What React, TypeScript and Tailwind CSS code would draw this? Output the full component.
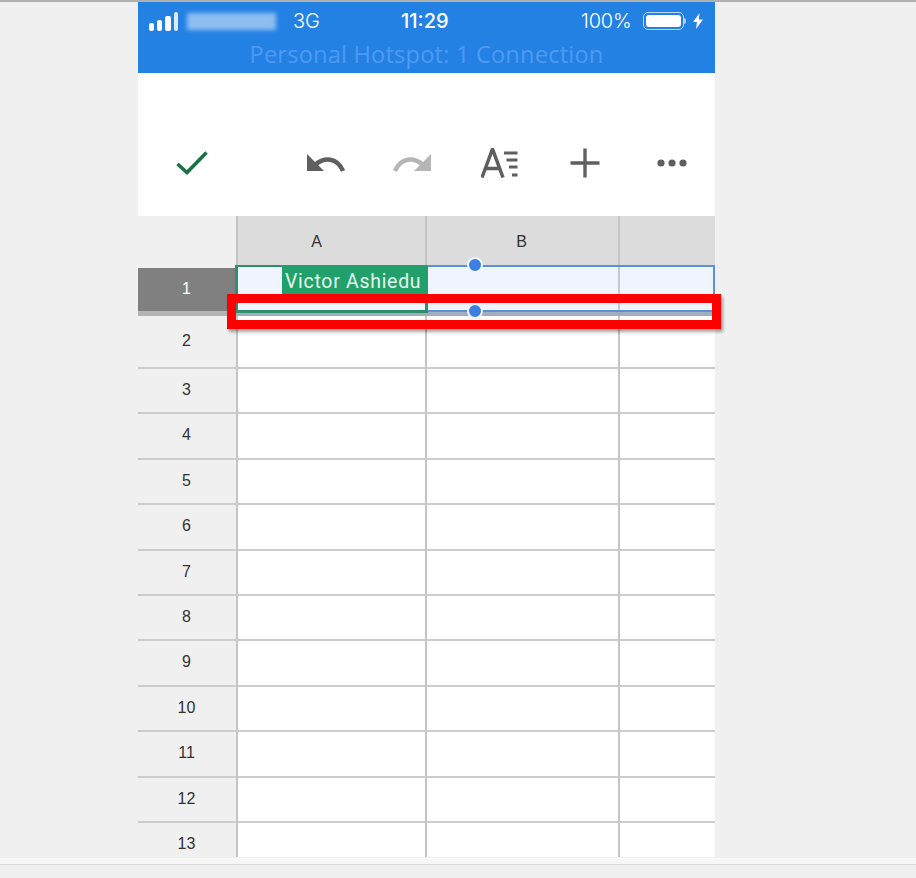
import React from 'react';

const rows = [
  { label: '2', h: 'h-[53px]' },
  { label: '3', h: 'h-[45px]' },
  { label: '4', h: 'h-[46px]' },
  { label: '5', h: 'h-[45px]' },
  { label: '6', h: 'h-[46px]' },
  { label: '7', h: 'h-[45px]' },
  { label: '8', h: 'h-[45px]' },
  { label: '9', h: 'h-[46px]' },
  { label: '10', h: 'h-[45px]' },
  { label: '11', h: 'h-[46px]' },
  { label: '12', h: 'h-[45px]' },
];

const StatusBar = () => (
  <div className="h-[71px] bg-[#2481e4] flex flex-col text-white font-['Inter',sans-serif]">
    <div className="h-[38px] flex items-center pl-[11px] text-[20px] leading-none">
      <div className="flex items-end gap-[3px] h-[19px] w-[29px]">
        <div className="w-[5px] h-[8px] bg-white rounded-[2px]" />
        <div className="w-[5px] h-[11px] bg-white rounded-[2px]" />
        <div className="w-[6px] h-[15px] bg-white rounded-[2px]" />
        <div className="w-[4px] h-[19px] bg-[#dcebfb] rounded-[2px]" />
      </div>
      <div className="ml-[9px] w-[89px] h-[17px] bg-[#8dbdf1] blur-[2px]" />
      <span className="ml-[17px] w-[34px] font-light">3G</span>
      <span className="ml-[74px] w-[56px] font-medium">11:29</span>
      <span className="ml-[124px] w-[56px] font-light tracking-[-0.2px]">100%</span>
      <div className="ml-[6px] w-[41px] h-[18px] border border-[#b9d7f6] rounded-[5px] p-[2px]">
        <div className="w-full h-full bg-white rounded-[3px]" />
      </div>
      <div className="w-[2px] h-[6px] bg-[#a9cdf4] rounded-r-[2px]" />
      <svg className="ml-[6px]" width="12" height="18" viewBox="0 0 12 18">
        <path d="M7.5 1 L1 10 H5 L4 17 L11 7.5 H6.8 Z" fill="#fff" />
      </svg>
    </div>
    <div className="h-[33px] flex justify-center items-start">
      <span className="text-[23.6px] leading-[28px] text-[#4e9af1] tracking-[0.2px] font-['Open_Sans',sans-serif]">
        Personal Hotspot: 1 Connection
      </span>
    </div>
  </div>
);

const Toolbar = () => (
  <div className="h-[143px] bg-white flex items-center pl-[38px] pt-[37px]">
    <svg width="32" height="24" viewBox="0 0 32 24" fill="none">
      <path d="M1.5 13 L11 21.5 L30.5 1.5" stroke="#1d7044" strokeWidth="3.6" />
    </svg>
    <svg className="ml-[99px]" width="38" height="18" viewBox="0 0 38 18">
      <path d="M0 0 L17 17 H0 Z" fill="#5f5f5f" />
      <path d="M8 11 C17 3 30 3 36 17" fill="none" stroke="#5f5f5f" strokeWidth="4.4" />
    </svg>
    <svg className="ml-[48px]" width="38" height="18" viewBox="0 0 38 18">
      <path d="M38 0 L21 17 H38 Z" fill="#b5b5b5" />
      <path d="M30 11 C21 3 8 3 2 17" fill="none" stroke="#b5b5b5" strokeWidth="4.4" />
    </svg>
    <svg className="ml-[50px]" width="38" height="30" viewBox="0 0 38 30" fill="none" stroke="#5f5f5f">
      <path d="M1 29.5 L11.5 1 L22 29.5 M4.5 20.5 H18.5" strokeWidth="3.5" />
      <path d="M23 5 H36.5 M25.5 12 H36.5 M28 19 H36.5 M31 27 H36.5" strokeWidth="3.2" />
    </svg>
    <svg className="ml-[51px]" width="30" height="30" viewBox="0 0 30 30" fill="none" stroke="#5f5f5f" strokeWidth="3.4">
      <path d="M0.5 15 H29.5 M15 0.5 V29.5" />
    </svg>
    <svg className="ml-[57px]" width="30" height="8" viewBox="0 0 30 8" fill="#5f5f5f">
      <circle cx="4" cy="4" r="3.6" />
      <circle cx="15" cy="4" r="3.6" />
      <circle cx="26" cy="4" r="3.6" />
    </svg>
  </div>
);

const Handle = ({ className }: { className: string }) => (
  <div className={`absolute w-[16px] h-[16px] rounded-full bg-[#3d7fe0] border-2 border-[#eef5fd] ${className}`} />
);

const Sheet = () => (
  <div className="relative font-['Liberation_Sans',sans-serif] text-[#333] text-[16px]">
    {/* column headers */}
    <div className="flex h-[49px]">
      <div className="w-[98px] bg-[#f0f0f0]" />
      <div className="w-[189px] bg-[#dcdcdc] border-l-2 border-[#c4c4c4] flex justify-center pt-[17px] leading-[18px] pr-[30px]">A</div>
      <div className="w-[193px] bg-[#dcdcdc] border-l-2 border-[#c4c4c4] flex justify-center pt-[17px] leading-[18px] pr-[2px]">B</div>
      <div className="flex-1 bg-[#dcdcdc] border-l-2 border-[#c4c4c4]" />
    </div>

    {/* selected row */}
    <div className="flex h-[51px]">
      <div className="w-[98px] bg-[#f0f0f0] flex flex-col pt-[3px]">
        <div className="h-[43px] bg-[#808080] text-white flex items-center justify-center pr-[1px] pb-[2px]">1</div>
        <div className="h-[5px] bg-[#b4b4b4]" />
      </div>
      <div className="flex-1 flex flex-col">
        <div className="h-[46px] bg-[#f0f5fd] flex">
          <div className="w-[189px]" />
          <div className="w-[193px] border-l-2 border-[#c4c8d0]" />
          <div className="flex-1 border-l-2 border-[#c4c8d0]" />
        </div>
        <div className="h-[5px] bg-[#a3adc0]" />
      </div>
    </div>

    {/* remaining rows */}
    {rows.map((row) => (
      <div key={row.label} className={`flex ${row.h}`}>
        <div className="w-[98px] pr-[1px] pb-[2px] bg-[#f0f0f0] border-b-2 border-[#cccccc] flex items-center justify-center">{row.label}</div>
        <div className="w-[189px] bg-white border-l-2 border-b-2 border-l-[#c4c4c4] border-b-[#cccccc]" />
        <div className="w-[193px] bg-white border-l-2 border-b-2 border-l-[#c4c4c4] border-b-[#cccccc]" />
        <div className="flex-1 bg-white border-l-2 border-b-2 border-l-[#c4c4c4] border-b-[#cccccc]" />
      </div>
    ))}
    <div className="flex h-[34px]">
      <div className="w-[98px] pr-[1px] pt-[12px] leading-[18px] bg-[#f0f0f0] flex justify-center">13</div>
      <div className="w-[189px] bg-white border-l-2 border-[#c4c4c4]" />
      <div className="w-[193px] bg-white border-l-2 border-[#c4c4c4]" />
      <div className="flex-1 bg-white border-l-2 border-[#c4c4c4]" />
    </div>

    {/* selection overlays */}
    <div className="absolute left-[290px] top-[49px] right-0 h-[47px] border-2 border-l-0 border-[#5b8fd6]" />
    <div className="absolute left-[97px] top-[49px] w-[193px] h-[48px] border-[3px] border-t-2 border-[#2f8f68]" />
    <div className="absolute left-[144px] top-[49px] w-[146px] h-[29px] bg-[#22a06b] text-[#e2f9ec] text-[19.5px] leading-[33px] pl-[3px] tracking-[0.7px] whitespace-nowrap font-['Roboto',sans-serif]">
      Victor Ashiedu
    </div>
    <Handle className="left-[329px] top-[41px]" />
    <Handle className="left-[329px] top-[87px]" />

    {/* red annotation */}
    <div className="absolute left-[89px] top-[78px] w-[494px] h-[35px] border-[9px] border-[#fe0000] shadow-[2px_3px_3px_rgba(0,0,0,0.35)]" />
  </div>
);

export default function App() {
  return (
    <div className="h-[878px] overflow-hidden bg-[#f0f0f0] flex flex-col">
      <div className="h-[2px] bg-[#b0b0b0]" />
      <div className="w-[577px] ml-[138px] h-[855px]">
        <StatusBar />
        <Toolbar />
        <Sheet />
      </div>
      <div className="h-[6px] bg-[#f6f6f6] border-t border-[#fbfbfb] mt-[1px]" />
      <div className="h-[1px] bg-[#d8d8d8]" />
    </div>
  );
}
